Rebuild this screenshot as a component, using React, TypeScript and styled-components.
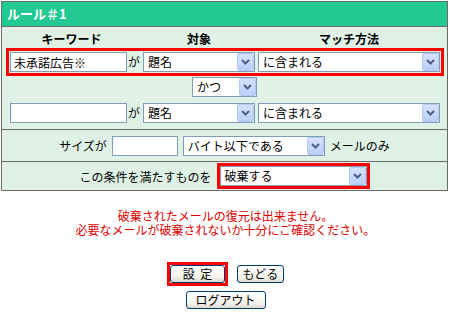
import React from 'react';
import styled, { createGlobalStyle } from 'styled-components';

const GlobalStyle = createGlobalStyle`
  body {
    margin: 0;
    background: #ffffff;
    font-family: "Noto Sans CJK JP", "Noto Sans", sans-serif;
    font-size: 12px;
    color: #000000;
  }
`;

const Page = styled.div`
  width: 450px;
  padding: 1px 0 0 1px;
  box-sizing: border-box;
`;

const Panel = styled.div`
  width: 447px;
  box-sizing: border-box;
  border: 1px solid #6b6b6b;
  background: #dff2e5;
`;

const Title = styled.div`
  height: 24px;
  line-height: 24px;
  padding-left: 5px;
  background: #22c993;
  border-bottom: 1px solid #6b6b6b;
  color: #ffffff;
  font-weight: bold;
  font-size: 13px;
`;

const Criteria = styled.div`
  padding: 0 0 2px 4px;
  border-bottom: 1px solid #6b6b6b;
`;

const Columns = styled.div`
  display: grid;
  grid-template-columns: 117px 16px 112px 3px 182px;
  align-items: center;
`;

const LabelRow = styled(Columns)`
  height: 21px;
  padding-left: 4px;
  padding-top: 1px;
  box-sizing: border-box;
`;

const ColumnLabel = styled.div<{ span?: number; shift?: number }>`
  grid-column: ${({ span }) => (span ? `span ${span}` : 'auto')};
  text-align: center;
  font-weight: bold;
  padding-right: ${({ shift }) => shift || 0}px;
`;

const RuleRow = styled(Columns)<{ highlight?: boolean }>`
  width: 438px;
  box-sizing: border-box;
  border: 3px solid ${({ highlight }) => (highlight ? '#ff0000' : 'transparent')};
  padding: 1px;
`;

const Ga = styled.span`
  padding-left: 1px;
  line-height: 20px;
`;

const JoinRow = styled.div`
  display: flex;
  justify-content: center;
  padding: 1px 4px 2px 0;
`;

const TextInput = styled.input<{ w: number }>`
  width: ${({ w }) => w}px;
  height: 20px;
  box-sizing: border-box;
  border: 1px solid #7f9db9;
  background: #ffffff;
  padding: 0 3px;
  margin: 0;
  font-family: "Noto Sans CJK JP", "Noto Sans", sans-serif;
  font-size: 12px;
  color: #000000;
  outline: none;
`;

const SelectBox = styled.div<{ w?: number }>`
  width: ${({ w }) => (w ? `${w}px` : 'auto')};
  height: 20px;
  box-sizing: border-box;
  border: 1px solid #7f9db9;
  background: #ffffff;
  display: flex;
  align-items: stretch;
`;

const SelectText = styled.span`
  flex: 1;
  padding-left: 4px;
  line-height: 18px;
  white-space: nowrap;
  overflow: hidden;
`;

const ArrowButton = styled.span`
  width: 17px;
  box-sizing: border-box;
  border: 1px solid #b4c8f4;
  border-radius: 2px;
  background: linear-gradient(#d6e2fd, #bccffa);
  display: flex;
  align-items: center;
  justify-content: center;
`;

const FormRow = styled.div<{ h: number }>`
  height: ${({ h }) => h}px;
  display: flex;
  align-items: center;
  justify-content: center;
  gap: 5px;
`;

const SizeRow = styled(FormRow)`
  border-bottom: 1px solid #6b6b6b;
`;

const Highlight = styled.div`
  border: 3px solid #ff0000;
  display: flex;
`;

const Notice = styled.div`
  margin-top: 18px;
  color: #e00000;
  text-align: center;
  line-height: 14px;
`;

const ButtonRow = styled.div<{ top: number }>`
  display: flex;
  justify-content: center;
  align-items: center;
  gap: 9px;
  margin-top: ${({ top }) => top}px;
`;

const Button = styled.button<{ w: number }>`
  width: ${({ w }) => w}px;
  height: 18px;
  box-sizing: border-box;
  margin: 0;
  padding: 0;
  border: 1px solid #003c74;
  border-radius: 3px;
  background: linear-gradient(#ffffff, #f3f2ec 70%, #dcd9cc);
  font-family: "Noto Sans CJK JP", "Noto Sans", sans-serif;
  font-size: 12px;
  line-height: 16px;
  color: #000000;
  white-space: pre;
`;

const Chevron = () => (
  <svg width="9" height="6" viewBox="0 0 9 6">
    <path d="M1 1 L4.5 4.5 L8 1" fill="none" stroke="#4d6185" strokeWidth="2" />
  </svg>
);

const Select = ({ value, w }: { value: string; w?: number }) => (
  <SelectBox w={w}>
    <SelectText>{value}</SelectText>
    <ArrowButton>
      <Chevron />
    </ArrowButton>
  </SelectBox>
);

const Rule = ({ keyword, highlight }: { keyword: string; highlight?: boolean }) => (
  <RuleRow highlight={highlight}>
    <TextInput w={117} defaultValue={keyword} />
    <Ga>が</Ga>
    <Select value="題名" w={112} />
    <span />
    <Select value="に含まれる" w={182} />
  </RuleRow>
);

export default function App() {
  return (
    <Page>
      <GlobalStyle />
      <Panel>
        <Title>ルール＃1</Title>
        <Criteria>
          <LabelRow>
            <ColumnLabel span={2} shift={10}>キーワード</ColumnLabel>
            <ColumnLabel>対象</ColumnLabel>
            <span />
            <ColumnLabel>マッチ方法</ColumnLabel>
          </LabelRow>
          <Rule keyword="未承諾広告※" highlight />
          <JoinRow>
            <Select value="かつ" w={65} />
          </JoinRow>
          <Rule keyword="" />
        </Criteria>
        <SizeRow h={31}>
          <span>サイズが</span>
          <TextInput w={66} defaultValue="" />
          <Select value="バイト以下である" w={142} />
          <span>メールのみ</span>
        </SizeRow>
        <FormRow h={28}>
          <span>この条件を満たすものを</span>
          <Highlight>
            <Select value="破棄する" w={147} />
          </Highlight>
        </FormRow>
      </Panel>
      <Notice>
        破棄されたメールの復元は出来ません。
        <br />
        必要なメールが破棄されないか十分にご確認ください。
      </Notice>
      <ButtonRow top={25}>
        <Highlight>
          <Button w={55}>{'設  定'}</Button>
        </Highlight>
        <Button w={47}>もどる</Button>
      </ButtonRow>
      <ButtonRow top={5}>
        <Button w={80}>ログアウト</Button>
      </ButtonRow>
    </Page>
  );
}
